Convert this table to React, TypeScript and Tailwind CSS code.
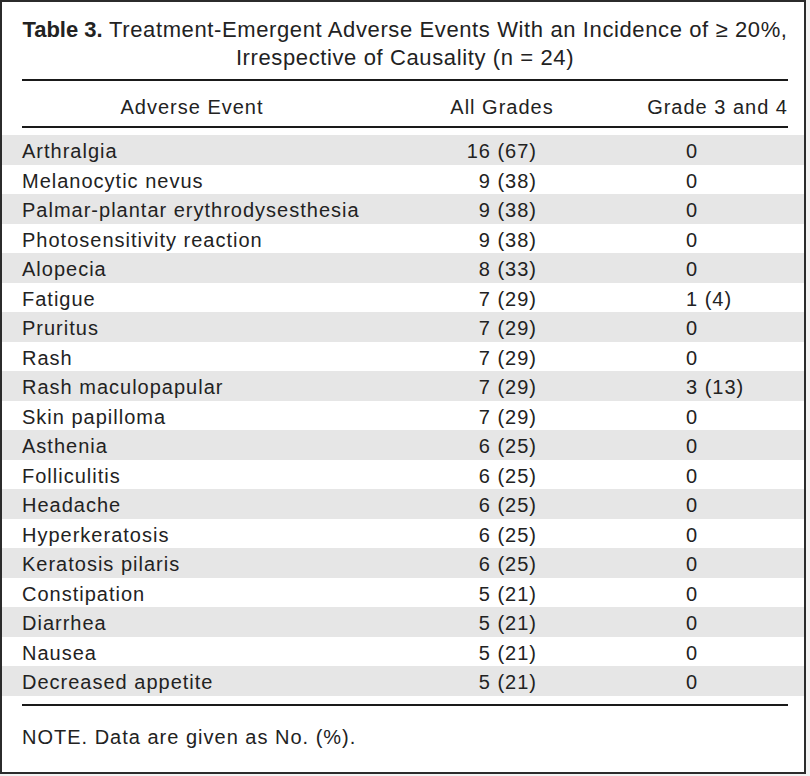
const rows: [string, string, string][] = [
  ["Arthralgia", "16 (67)", "0"],
  ["Melanocytic nevus", "9 (38)", "0"],
  ["Palmar-plantar erythrodysesthesia", "9 (38)", "0"],
  ["Photosensitivity reaction", "9 (38)", "0"],
  ["Alopecia", "8 (33)", "0"],
  ["Fatigue", "7 (29)", "1 (4)"],
  ["Pruritus", "7 (29)", "0"],
  ["Rash", "7 (29)", "0"],
  ["Rash maculopapular", "7 (29)", "3 (13)"],
  ["Skin papilloma", "7 (29)", "0"],
  ["Asthenia", "6 (25)", "0"],
  ["Folliculitis", "6 (25)", "0"],
  ["Headache", "6 (25)", "0"],
  ["Hyperkeratosis", "6 (25)", "0"],
  ["Keratosis pilaris", "6 (25)", "0"],
  ["Constipation", "5 (21)", "0"],
  ["Diarrhea", "5 (21)", "0"],
  ["Nausea", "5 (21)", "0"],
  ["Decreased appetite", "5 (21)", "0"],
]

export default function App() {
  return (
    <div className="w-[810px] h-[776px] bg-[#f2f2f2]">
      <div className="w-[806px] h-[774px] border-2 border-[#2b2b2b] bg-white text-[#222] font-['Liberation_Sans',Arial,sans-serif] text-[20px] tracking-[0.05em] flex flex-col">
        {/* title */}
        <div className="shrink-0 pl-[20px] pr-[16px] pt-[14px] text-center text-[22px] leading-[28px] tracking-[0.028em] whitespace-nowrap">
          <span className="font-bold tracking-normal">Table 3.</span> Treatment-Emergent Adverse Events With an Incidence of ≥ 20%,
          <br />
          Irrespective of Causality (n = 24)
        </div>
        <div className="shrink-0 ml-[20px] mr-[16px] mt-[7px] h-[2px] bg-[#1a1a1a]" />

        {/* header */}
        <div className="shrink-0 flex pl-[20px] pr-[16px] pt-[12px] pb-[5px] leading-[28px]">
          <div className="w-[340px] text-center">Adverse Event</div>
          <div className="ml-[40px] w-[200px] text-center">All Grades</div>
          <div className="flex-1 text-right">Grade 3 and 4</div>
        </div>
        <div className="shrink-0 ml-[20px] mr-[16px] h-[2px] bg-[#1a1a1a]" />

        {/* body */}
        <div className="shrink-0 mt-[7px] flex flex-col">
          {rows.map(([name, all, g34], i) => (
            <div
              key={name}
              className={`flex h-[29.5px] items-center pl-[20px] pt-[3px] leading-[24px] ${i % 2 === 0 ? "bg-[#e6e6e6]" : "bg-white"}`}
            >
              <span className="w-[415px]">{name}</span>
              <span className="w-[100px] text-right">{all}</span>
              <span className="ml-[149px]">{g34}</span>
            </div>
          ))}
        </div>
        <div className="shrink-0 ml-[20px] mr-[16px] mt-[8px] h-[2px] bg-[#1a1a1a]" />

        <div className="shrink-0 pl-[20px] pt-[17px] leading-[28px]">NOTE. Data are given as No. (%).</div>
      </div>
    </div>
  )
}
